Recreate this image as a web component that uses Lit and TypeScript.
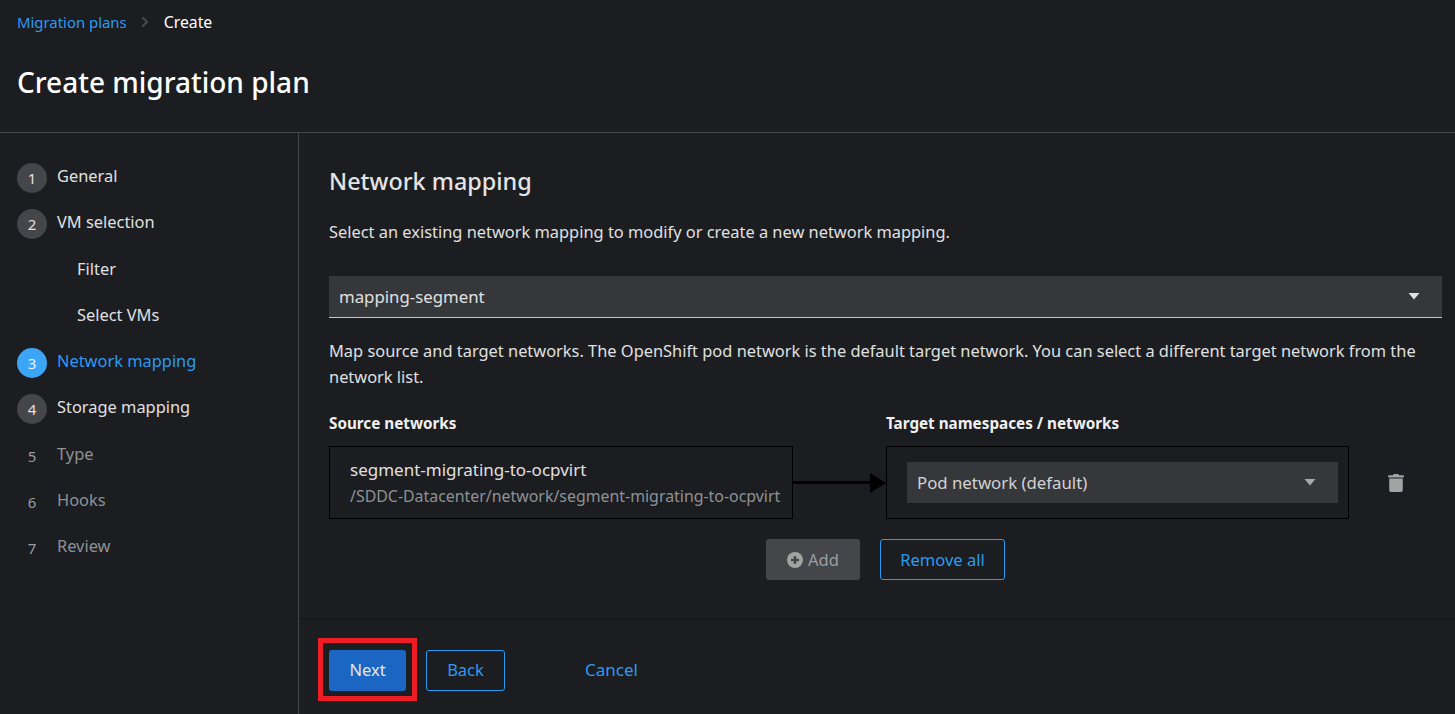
import { LitElement, html, css } from 'lit';
import { customElement } from 'lit/decorators.js';

type Step = { num?: string; label: string; state: 'done' | 'current' | 'off' | 'sub' };

const STEPS: Step[] = [
  { num: '1', label: 'General', state: 'done' },
  { num: '2', label: 'VM selection', state: 'done' },
  { label: 'Filter', state: 'sub' },
  { label: 'Select VMs', state: 'sub' },
  { num: '3', label: 'Network mapping', state: 'current' },
  { num: '4', label: 'Storage mapping', state: 'done' },
  { num: '5', label: 'Type', state: 'off' },
  { num: '6', label: 'Hooks', state: 'off' },
  { num: '7', label: 'Review', state: 'off' },
];

@customElement('app-root')
export class AppRoot extends LitElement {
  static styles = css`
    :host {
      display: block;
      width: 1455px;
      height: 714px;
      overflow: hidden;
      background: #1b1d21;
      color: #e0e0e0;
      font-family: 'Noto Sans', 'Open Sans', sans-serif;
      font-size: 16.4px;
    }
    .head {
      height: 133px;
      box-sizing: border-box;
      padding: 10px 17px 0;
      border-bottom: 1px solid #444548;
    }
    .crumbs {
      display: flex;
      align-items: center;
      height: 24px;
      font-size: 14.9px;
    }
    .crumbs a { color: #2b9af3; }
    .crumbs svg { margin: 0 15px 0 14px; }
    .crumbs span { color: #fff; font-size: 15.8px; }
    h1 {
      margin: 28px 0 0;
      font-size: 28px;
      line-height: 40px;
      font-weight: 500;
      color: #fff;
    }
    .body {
      display: grid;
      grid-template-columns: 299px 1fr;
      height: 581px;
    }
    .nav {
      border-right: 1px solid #444548;
      padding-top: 30px;
      display: flex;
      flex-direction: column;
      gap: 16.3px;
    }
    .step {
      display: flex;
      gap: 10px;
      height: 30px;
      padding-left: 17px;
      font-size: 16.4px;
      line-height: 26px;
      color: #e0e0e0;
    }
    .step .n {
      width: 30px;
      height: 30px;
      border-radius: 50%;
      background: #45464a;
      display: flex;
      align-items: center;
      justify-content: center;
      font-size: 15px;
    }
    .step.current { color: #2b9af3; }
    .step.current .n { background: #3ca5f5; color: #e8f4fe; }
    .step.off { color: #8f9194; }
    .step.off .n { background: transparent; color: #9a9c9f; }
    .step.sub { padding-left: 77px; }
    .main {
      display: flex;
      flex-direction: column;
      min-width: 0;
    }
    .content {
      height: 487px;
      box-sizing: border-box;
      padding: 30px 13px 0 30px;
      border-bottom: 2px solid #17181b;
    }
    h2 {
      margin: 0;
      font-size: 23.4px;
      line-height: 36px;
      font-weight: 500;
      color: #e4e4e4;
    }
    p {
      margin: 0;
      font-size: 16.4px;
      line-height: 26px;
      color: #e0e0e0;
    }
    .intro { margin-top: 20px; }
    .select {
      display: flex;
      align-items: center;
      justify-content: space-between;
      background: #36373b;
      box-sizing: border-box;
      font-size: 16.8px;
    }
    .map-select {
      height: 42px;
      margin-top: 31px;
      padding: 0 22px 0 10px;
      border-bottom: 1px solid #c7c7c7;
    }
    .desc { margin-top: 20px; }
    .grid {
      display: grid;
      grid-template-columns: 464px 93px 463px 1fr;
      margin-top: 21px;
    }
    .label {
      font-size: 15.25px;
      font-weight: 700;
      line-height: 24px;
      color: #f0f0f0;
      height: 35px;
    }
    .box {
      border: 1px solid #000;
      height: 73px;
      box-sizing: border-box;
    }
    .source {
      padding: 10px 10px 0 20px;
      font-size: 17px;
      line-height: 26px;
      white-space: nowrap;
    }
    .source small {
      display: block;
      font-size: 15.9px;
      line-height: 26px;
      color: #8f9194;
    }
    .link {
      display: flex;
      align-items: center;
      height: 73px;
    }
    .link i {
      flex: 1;
      height: 3px;
      background: #000;
    }
    .link b {
      border-left: 16px solid #000;
      border-top: 10px solid transparent;
      border-bottom: 10px solid transparent;
    }
    .target {
      padding: 15px 10px 0 20px;
    }
    .target .select {
      height: 41px;
      padding: 0 22px 0 10px;
      color: #d2d2d2;
    }
    .trash {
      display: flex;
      align-items: center;
      height: 73px;
      padding-left: 39px;
    }
    .actions {
      display: flex;
      gap: 20px;
      justify-content: flex-start;
      margin: 20px 0 0 437px;
    }
    .btn {
      height: 41px;
      box-sizing: border-box;
      display: inline-flex;
      align-items: center;
      justify-content: center;
      gap: 5px;
      border-radius: 3px;
      font-size: 16.5px;
    }
    .add {
      width: 94px;
      background: #45464a;
      color: #9c9ea1;
    }
    .outline {
      border: 1px solid #2b9af3;
      color: #2b9af3;
    }
    .remove { width: 125px; }
    .foot {
      position: relative;
      display: flex;
      align-items: center;
      gap: 20px;
      padding: 30px 0 0 30px;
    }
    .foot .btn { padding-bottom: 2px; }
    .next {
      width: 77px;
      background: #1a66c2;
      color: #e6e6e6;
    }
    .back { width: 79px; }
    .cancel {
      color: #2b9af3;
      margin: 0 0 2px 60px;
      font-size: 17px;
    }
    .mark {
      position: absolute;
      left: 19px;
      top: 18px;
      width: 99px;
      height: 63px;
      box-sizing: border-box;
      border: 5px solid #ee1c25;
    }
  `;

  private caret(color: string) {
    return html`<svg width="12" height="7" viewBox="0 0 12 7"><path d="M.5 0h11L6 6.5z" fill=${color}></path></svg>`;
  }

  render() {
    return html`
      <div class="head">
        <div class="crumbs">
          <a>Migration plans</a>
          <svg width="8" height="12" viewBox="0 0 8 12"><path d="M1.5 1.500 6 6l-4.500 4.500" fill="none" stroke="#4a4b4f" stroke-width="2"></path></svg>
          <span>Create</span>
        </div>
        <h1>Create migration plan</h1>
      </div>
      <div class="body">
        <div class="nav">
          ${STEPS.map(
            (s) => html`<div class="step ${s.state}">
              ${s.num ? html`<div class="n">${s.num}</div>` : ''}
              <div>${s.label}</div>
            </div>`
          )}
        </div>
        <div class="main">
          <div class="content">
            <h2>Network mapping</h2>
            <p class="intro">Select an existing network mapping to modify or create a new network mapping.</p>
            <div class="select map-select">
              <span>mapping-segment</span>
              ${this.caret('#e0e0e0')}
            </div>
            <p class="desc">
              Map source and target networks. The OpenShift pod network is the default target network. You can select a different target network from the network list.
            </p>
            <div class="grid">
              <div class="label">Source networks</div>
              <div></div>
              <div class="label">Target namespaces / networks</div>
              <div></div>
              <div class="box source">
                segment-migrating-to-ocpvirt
                <small>/SDDC-Datacenter/network/segment-migrating-to-ocpvirt</small>
              </div>
              <div class="link"><i></i><b></b></div>
              <div class="box target">
                <div class="select">
                  <span>Pod network (default)</span>
                  ${this.caret('#a8a8a8')}
                </div>
              </div>
              <div class="trash">
                <svg width="16" height="18" viewBox="0 0 448 512"><path fill="#a3a3a3" d="M32 464a48 48 0 0 0 48 48h288a48 48 0 0 0 48-48V128H32zM432 32H312l-9.400-18.700A24 24 0 0 0 281.100 0H166.800a23.700 23.700 0 0 0-21.400 13.300L136 32H16A16 16 0 0 0 0 48v32a16 16 0 0 0 16 16h416a16 16 0 0 0 16-16V48a16 16 0 0 0-16-16z"></path></svg>
              </div>
            </div>
            <div class="actions">
              <div class="btn add">
                <svg width="16" height="16" viewBox="0 0 16 16"><circle cx="8" cy="8" r="8" fill="#a3a3a3"></circle><path d="M8 4v8M4 8h8" stroke="#45464a" stroke-width="2.400"></path></svg>
                Add
              </div>
              <div class="btn outline remove">Remove all</div>
            </div>
          </div>
          <div class="foot">
            <div class="btn next">Next</div>
            <div class="btn outline back">Back</div>
            <div class="cancel">Cancel</div>
            <div class="mark"></div>
          </div>
        </div>
      </div>
    `;
  }
}
